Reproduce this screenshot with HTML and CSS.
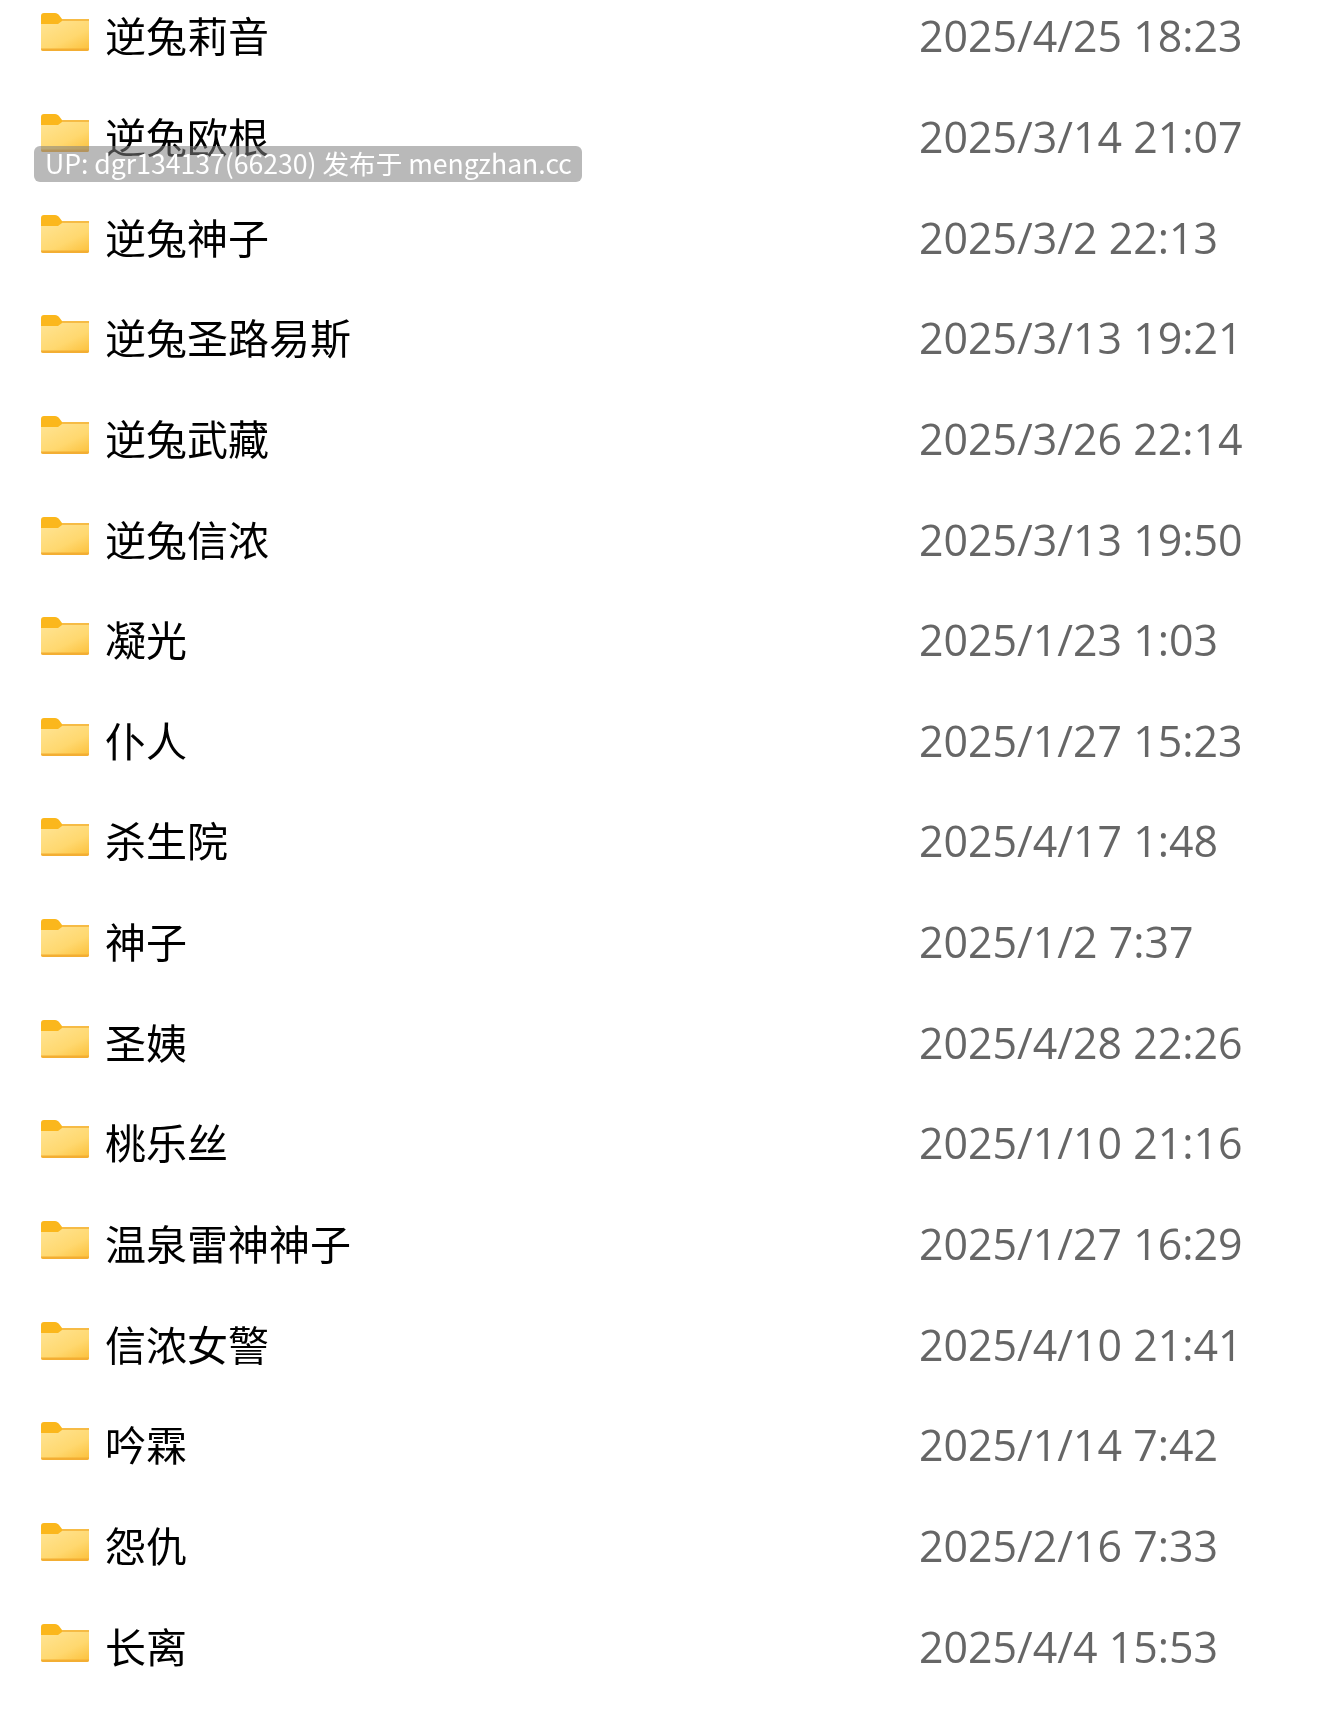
FILE: index.html
```html
<!DOCTYPE html>
<html lang="zh-CN">
<head>
    <meta charset="UTF-8">
    <meta name="viewport" content="width=device-width, initial-scale=1.0">
    <title>文件夹列表</title>
    <link rel="stylesheet" href="styles.css">
</head>
<body>
    <svg class="defs" width="0" height="0">
        <defs>
            <linearGradient id="folderFill" x1="0.1" y1="0" x2="0.9" y2="1">
                <stop offset="0" stop-color="#ffe391"/>
                <stop offset="0.6" stop-color="#ffd86f"/>
                <stop offset="1" stop-color="#fcc23e"/>
            </linearGradient>
            <symbol id="folder" viewBox="0 0 48 38">
                <path d="M0 3a3 3 0 0 1 3-3h11c2 0 3 1 4 2l3 4h25a2 2 0 0 1 2 2v6H0z" fill="#fbb71c"/>
                <path d="M0 11h17l4-3h27v28a2 2 0 0 1-2 2H2a2 2 0 0 1-2-2z" fill="url(#folderFill)"/>
                <path d="M0 35.500h48V36a2 2 0 0 1-2 2H2a2 2 0 0 1-2-2z" fill="#f3ae33"/>
                <path d="M21 6h27v2H21z" fill="#f6bb45"/>
            </symbol>
        </defs>
    </svg>

    <ul class="files">
        <li class="row"><svg class="icon"><use href="#folder"/></svg><span class="name">逆兔莉音</span><span class="date">2025/4/25 18:23</span></li>
        <li class="row"><svg class="icon"><use href="#folder"/></svg><span class="name">逆兔欧根</span><span class="date">2025/3/14 21:07</span></li>
        <li class="row"><svg class="icon"><use href="#folder"/></svg><span class="name">逆兔神子</span><span class="date">2025/3/2 22:13</span></li>
        <li class="row"><svg class="icon"><use href="#folder"/></svg><span class="name">逆兔圣路易斯</span><span class="date">2025/3/13 19:21</span></li>
        <li class="row"><svg class="icon"><use href="#folder"/></svg><span class="name">逆兔武藏</span><span class="date">2025/3/26 22:14</span></li>
        <li class="row"><svg class="icon"><use href="#folder"/></svg><span class="name">逆兔信浓</span><span class="date">2025/3/13 19:50</span></li>
        <li class="row"><svg class="icon"><use href="#folder"/></svg><span class="name">凝光</span><span class="date">2025/1/23 1:03</span></li>
        <li class="row"><svg class="icon"><use href="#folder"/></svg><span class="name">仆人</span><span class="date">2025/1/27 15:23</span></li>
        <li class="row"><svg class="icon"><use href="#folder"/></svg><span class="name">杀生院</span><span class="date">2025/4/17 1:48</span></li>
        <li class="row"><svg class="icon"><use href="#folder"/></svg><span class="name">神子</span><span class="date">2025/1/2 7:37</span></li>
        <li class="row"><svg class="icon"><use href="#folder"/></svg><span class="name">圣姨</span><span class="date">2025/4/28 22:26</span></li>
        <li class="row"><svg class="icon"><use href="#folder"/></svg><span class="name">桃乐丝</span><span class="date">2025/1/10 21:16</span></li>
        <li class="row"><svg class="icon"><use href="#folder"/></svg><span class="name">温泉雷神神子</span><span class="date">2025/1/27 16:29</span></li>
        <li class="row"><svg class="icon"><use href="#folder"/></svg><span class="name">信浓女警</span><span class="date">2025/4/10 21:41</span></li>
        <li class="row"><svg class="icon"><use href="#folder"/></svg><span class="name">吟霖</span><span class="date">2025/1/14 7:42</span></li>
        <li class="row"><svg class="icon"><use href="#folder"/></svg><span class="name">怨仇</span><span class="date">2025/2/16 7:33</span></li>
        <li class="row"><svg class="icon"><use href="#folder"/></svg><span class="name">长离</span><span class="date">2025/4/4 15:53</span></li>
    </ul>

    <div class="watermark">UP: dgr134137(66230) 发布于 mengzhan.cc</div>
</body>
</html>
```

FILE: styles.css
```css
html, body {
    margin: 0;
    background: #fff;
}
body {
    position: relative;
    height: 1730px;
    overflow: hidden;
}
.defs {
    display: block;
    height: 0;
}
.files {
    list-style: none;
    margin: -14px 0 0;
    padding: 0 0 0 41px;
    filter: blur(0.6px);
}
.row {
    display: grid;
    grid-template-columns: 48px 796px auto;
    column-gap: 17px;
    align-items: center;
    height: 100.65px;
}
.icon {
    width: 48px;
    height: 38px;
    margin-top: -8px;
}
.name {
    font-family: "Noto Sans CJK SC", sans-serif;
    font-size: 41px;
    line-height: 50px;
    color: #000;
    white-space: nowrap;
    margin-left: -1px;
    margin-top: -4px;
}
.date {
    font-family: "Open Sans", sans-serif;
    font-size: 42.9px;
    line-height: 50px;
    color: #666;
    white-space: nowrap;
}
.watermark {
    position: absolute;
    left: 34px;
    top: 146px;
    width: 548px;
    height: 36px;
    box-sizing: border-box;
    padding-left: 11px;
    border-radius: 6px;
    background: rgba(128, 128, 128, 0.55);
    color: #fff;
    font-family: "Noto Sans CJK SC", sans-serif;
    font-size: 26.6px;
    line-height: 33px;
    white-space: nowrap;
    filter: blur(0.3px);
}
```
